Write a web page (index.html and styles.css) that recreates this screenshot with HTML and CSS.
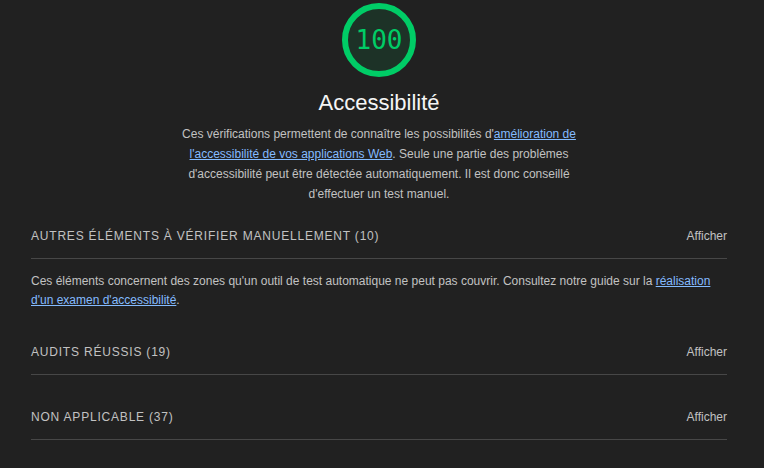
FILE: index.html
```html
<!DOCTYPE html>
<html lang="fr">
<head>
<meta charset="utf-8">
<title>Accessibilité</title>
<link rel="stylesheet" href="styles.css">
</head>
<body>
<div class="report">
  <header class="cat-header">
    <div class="gauge">
      <svg class="gauge-svg" width="76" height="76" viewBox="0 0 76 76">
        <circle cx="38" cy="38" r="34" class="gauge-base"/>
        <circle cx="38" cy="38" r="34" class="gauge-arc"/>
      </svg>
      <span class="gauge-num">100</span>
    </div>
    <h1 class="cat-title">Accessibilité</h1>
    <p class="cat-desc">Ces vérifications permettent de connaître les possibilités d'<a href="#">amélioration de l'accessibilité de vos applications Web</a>. Seule une partie des problèmes d'accessibilité peut être détectée automatiquement. Il est donc conseillé d'effectuer un test manuel.</p>
  </header>

  <section class="clump clump-first">
    <div class="clump-head">
      <span class="clump-title">Autres éléments à vérifier manuellement (10)</span>
      <span class="clump-toggle">Afficher</span>
    </div>
    <p class="clump-desc">Ces éléments concernent des zones qu'un outil de test automatique ne peut pas couvrir. Consultez notre guide sur la <a href="#">réalisation d'un examen d'accessibilité</a>.</p>
  </section>

  <section class="clump">
    <div class="clump-head">
      <span class="clump-title">Audits réussis (19)</span>
      <span class="clump-toggle">Afficher</span>
    </div>
  </section>

  <section class="clump">
    <div class="clump-head">
      <span class="clump-title">Non applicable (37)</span>
      <span class="clump-toggle">Afficher</span>
    </div>
  </section>
</div>
</body>
</html>
```
FILE: styles.css
```css
html, body {
  margin: 0;
  padding: 0;
  background: #212121;
}
body {
  font-family: "Liberation Sans", Arial, sans-serif;
  color: #c2c2c2;
  font-size: 12px;
}
a {
  color: #84bbff;
  text-decoration: underline;
}
.report {
  padding: 0 37px 0 31px;
}
.cat-header {
  display: flex;
  flex-direction: column;
  align-items: center;
  padding-top: 2px;
}
.gauge {
  position: relative;
  width: 76px;
  height: 76px;
}
.gauge-svg {
  display: block;
}
.gauge-base {
  fill: rgba(0, 204, 102, 0.1);
  stroke: none;
}
.gauge-arc {
  fill: none;
  stroke: #00cc66;
  stroke-width: 6;
}
.gauge-num {
  position: absolute;
  inset: 0;
  display: flex;
  align-items: center;
  justify-content: center;
  font-family: "DejaVu Sans Mono", "Liberation Mono", monospace;
  font-size: 26px;
  color: #00cc66;
}
.cat-title {
  margin: 12px 0 0;
  font-size: 22px;
  line-height: 26px;
  font-weight: normal;
  color: #f5f5f5;
}
.cat-desc {
  margin: 8px 0 0;
  max-width: 400px;
  text-align: center;
  line-height: 20px;
}
.clump-head {
  display: flex;
  justify-content: space-between;
  align-items: center;
  line-height: 16px;
  padding: 34px 0 14px;
  border-bottom: 1px solid #474747;
}
.clump-first .clump-head {
  padding-top: 24px;
}
.clump-title {
  text-transform: uppercase;
  letter-spacing: 0.8px;
  font-size: 12px;
}
.clump-desc {
  margin: 13px 0 0;
  line-height: 19px;
}
```
